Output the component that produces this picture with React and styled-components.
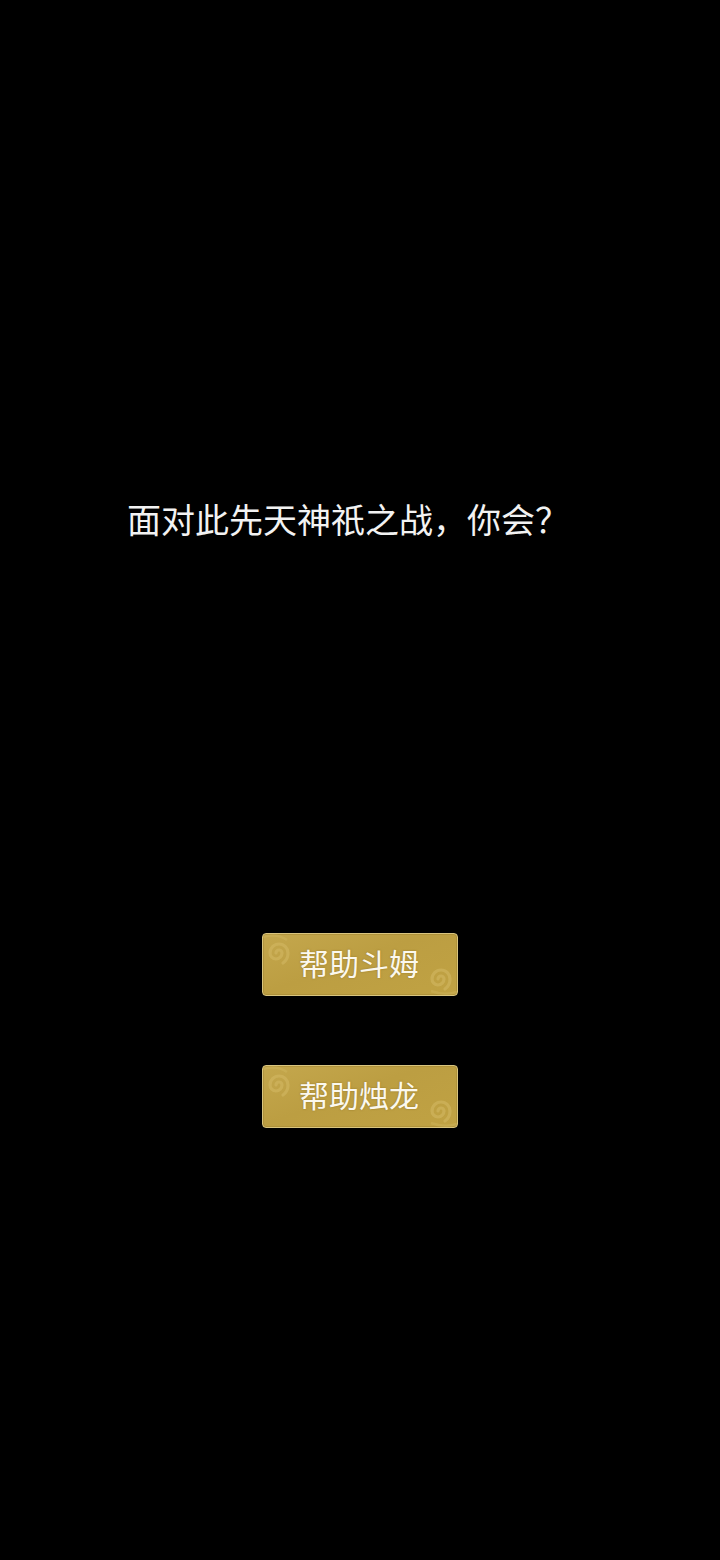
import styled, { createGlobalStyle } from "styled-components";

const GlobalStyle = createGlobalStyle`
    html, body {
        margin: 0;
        padding: 0;
        background: #000;
    }
    body {
        font-family: "Noto Sans CJK SC", "Noto Sans", sans-serif;
    }
`

const Page = styled.div`
    width: 720px;
    height: 1560px;
    background: #000;
    display: flex;
    flex-direction: column;
    box-sizing: border-box;
    padding-top: 493px;
`

const Question = styled.div`
    padding-left: 127px;
    color: #f2f2f2;
    font-size: 34px;
    line-height: 52px;
    font-family: "Noto Sans CJK SC", sans-serif;
`

const Choices = styled.div`
    margin-top: 388px;
    display: flex;
    flex-direction: column;
    align-items: center;
    gap: 69px;
`

const Choice = styled.button`
    position: relative;
    width: 196px;
    height: 63px;
    border: 1px solid #d9c57f;
    border-radius: 4px;
    background: linear-gradient(160deg, #c4a74d 0%, #bc9e42 45%, #c0a243 100%);
    box-shadow: inset 0 0 0 1px rgba(150, 120, 40, 0.35);
    color: #fbf8ee;
    font-family: "Noto Sans CJK SC", sans-serif;
    font-size: 30px;
    text-shadow: 0 0 2px rgba(120, 90, 20, 0.6);
    overflow: hidden;
    padding: 0;
    cursor: pointer;
    display: flex;
    align-items: center;
    justify-content: center;
`

const Label = styled.span`
    position: relative;
    z-index: 1;
    padding-bottom: 5px;
    padding-right: 2px;
`

const Cloud = styled.svg`
    position: absolute;
    width: 36px;
    height: 36px;
    ${({ $corner }) => $corner === "tl"
        ? "left: -2px; top: 0px;"
        : "right: -2px; bottom: -1px;"}
`

function Swirl({ corner }) {
    return (
        <Cloud $corner={corner} viewBox="0 0 36 36">
            <g fill="none" stroke="#d2b862" strokeOpacity="0.6" strokeWidth="3.2" strokeLinecap="round">
                <path d="M18 19 m-3 0 a3 3 0 1 1 6 0 a6 6 0 1 1 -12 0 a9 9 0 1 1 18 0 a12 12 0 0 1 -5 10" />
            </g>
            {corner === "tl"
                ? <path d="M2 3 Q16 -1 26 6" fill="none" stroke="#d2b862" strokeOpacity="0.4" strokeWidth="2.5" />
                : <path d="M34 32 Q22 36 8 31" fill="none" stroke="#d2b862" strokeOpacity="0.4" strokeWidth="2.5" />}
        </Cloud>
    )
}

export default function App(){
    const options = ["帮助斗姆", "帮助烛龙"]
    return(
    <>
        <GlobalStyle />
        <Page>
            <Question>面对此先天神祇之战，你会？</Question>
            <Choices>
                {options.map((o)=>(
                    <Choice key={o}>
                        <Swirl corner="tl" />
                        <Swirl corner="br" />
                        <Label>{o}</Label>
                    </Choice>
                ))}
            </Choices>
        </Page>
    </>
    )
}
